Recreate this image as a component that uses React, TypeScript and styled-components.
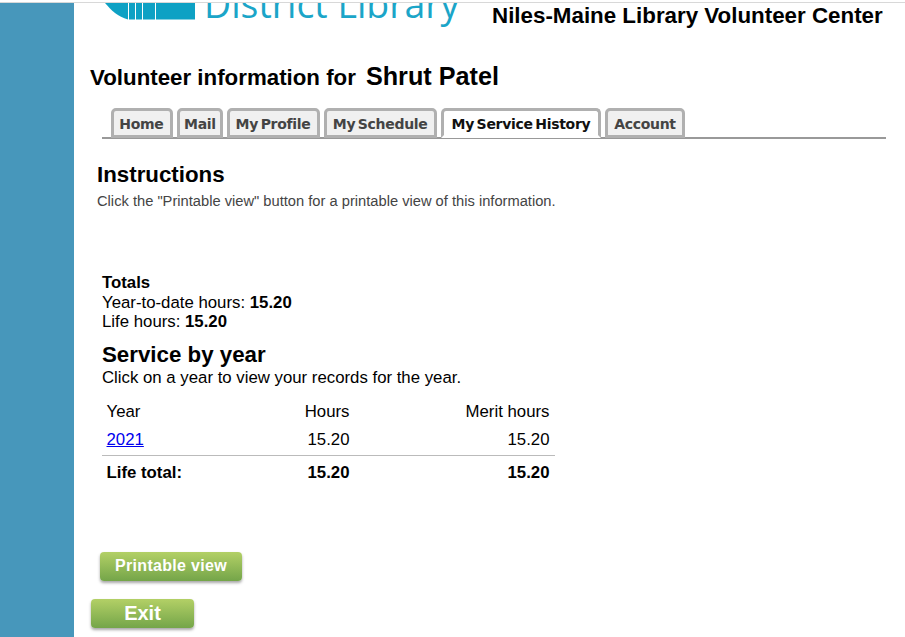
import styled, {createGlobalStyle} from "styled-components";

const GlobalStyle = createGlobalStyle`
  html, body {
    margin: 0;
    padding: 0;
    background: #fff;
  }
  body {
    padding-top: 2px;
    font-family: "Liberation Sans", Arial, sans-serif;
    color: #000;
  }
`;

const Page = styled.div`
  display: flex;
  width: 905px;
  height: 634px;
  border-top: 1px solid #d8d8d8;
  overflow: hidden;
`;
const Sidebar = styled.aside`
  width: 74px;
  flex: none;
  background: #4797bb;
`;
const Main = styled.main`
  flex: 1;
  min-width: 0;
`;
const Header = styled.header`
  display: flex;
  height: 29px;
  overflow: hidden;
`;
const Logo = styled.div`
  display: flex;
  align-items: flex-start;
  gap: 9px;
  width: 418px;
  padding-left: 29px;
  box-sizing: border-box;
`;
const LogoMark = styled.svg`
  width: 92px;
  height: 17px;
  flex: none;
`;
const LogoText = styled.div`
  margin-top: -19px;
  font-family: "Open Sans", sans-serif;
  font-size: 37.4px;
  font-weight: 400;
  line-height: 40px;
  color: #1ba5c8;
  white-space: nowrap;
`;
const SiteTitle = styled.div`
  font-size: 22.35px;
  font-weight: bold;
  line-height: 26px;
  white-space: nowrap;
`;
const VolunteerHeading = styled.h1`
  display: flex;
  align-items: baseline;
  gap: 10px;
  margin: 28px 0 0 16px;
  font-size: 22.3px;
  font-weight: bold;
  line-height: 32px;
`;
const VolunteerName = styled.span`
  font-size: 25.2px;
`;
const TabBar = styled.nav`
  display: flex;
  gap: 4px;
  margin: 14px 19px 0 28px;
  padding-left: 8.5px;
  height: 29px;
  border-bottom: 2px solid #999;
`;
const Tab = styled.a<{$active?: boolean; $narrow?: boolean}>`
  display: flex;
  align-items: center;
  height: 30px;
  box-sizing: border-box;
  padding: 2px ${(p) => (p.$active ? "8px" : p.$narrow ? "4px" : "6.5px")} 0
    ${(p) => (p.$active ? "7.5px" : p.$narrow ? "4px" : "5.8px")};
  border: 3px solid #b0b0b0;
  border-bottom-color: ${(p) => (p.$active ? "#fff" : "#b0b0b0")};
  border-radius: 5px 5px 0 0;
  background: ${(p) => (p.$active ? "#fff" : "#f0f0f0")};
  color: ${(p) => (p.$active ? "#111" : "#444")};
  font-family: "DejaVu Sans", sans-serif;
  font-size: 14px;
  font-weight: bold;
  letter-spacing: -0.3px;
  word-spacing: -2px;
  white-space: nowrap;
`;
const Instructions = styled.section`
  margin: 22px 0 0 23px;
`;
const SectionTitle = styled.h2`
  margin: 0;
  font-size: 22.3px;
  font-weight: bold;
  line-height: 28px;
`;
const Hint = styled.p`
  margin: 3px 0 0;
  font-size: 14.7px;
  line-height: 18px;
  color: #444;
`;
const Service = styled.section`
  margin: 63px 0 0 28px;
  font-size: 16.8px;
  line-height: 19.5px;
`;
const Label = styled.div`
  font-weight: bold;
`;
const ServiceTitle = styled.h2`
  margin: 10px 0 0;
  font-size: 22.3px;
  font-weight: bold;
  line-height: 26px;
`;
const HoursTable = styled.table`
  width: 453px;
  margin-top: 10px;
  border-collapse: collapse;
  font-size: 16.8px;
  line-height: 19px;
`;
const Cell = styled.td`
  padding: 5px 5.5px 4px 4.5px;
  text-align: right;
  &:first-child {
    width: 130px;
    text-align: left;
  }
  &:nth-child(2) {
    width: 103px;
  }
`;
const YearRow = styled.tr`
  td {
    padding-bottom: 6px;
  }
`;
const TotalRow = styled.tr`
  border-top: 1px solid #bbb;
  font-weight: bold;
  td {
    padding-top: 7px;
  }
`;
const YearLink = styled.a`
  color: #00e;
  text-decoration: underline;
`;
const Actions = styled.div`
  display: flex;
  flex-direction: column;
  align-items: flex-start;
  gap: 18px;
  margin-top: 66px;
`;
const GreenButton = styled.button<{$large?: boolean}>`
  display: block;
  width: ${(p) => (p.$large ? "103px" : "142px")};
  height: 29px;
  margin-left: ${(p) => (p.$large ? "17px" : "26px")};
  padding: ${(p) => (p.$large ? "0" : "0 0 2px")};
  border: none;
  border-radius: 4px;
  background: linear-gradient(#b3d066, #74a549);
  box-shadow: 0 2px 3px rgba(0, 0, 0, 0.35);
  color: #fff;
  font-family: "Liberation Sans", Arial, sans-serif;
  font-size: ${(p) => (p.$large ? "20px" : "16px")};
  font-weight: bold;
  letter-spacing: ${(p) => (p.$large ? "0" : "0.3px")};
`;

const tabs = ["Home", "Mail", "My Profile", "My Schedule", "My Service History", "Account"];

export default function App() {
  return (
    <Page>
      <GlobalStyle />
      <Sidebar />
      <Main>
        <Header>
          <Logo>
            <LogoMark viewBox="0 0 92 17">
              <path d="M2 0 H25 V16.5 C15 14 8 7 2 0 Z" fill="#0ea1c4" />
              <path d="M26 0 H32 V16.5 H26 Z M33 0 H39 V16.5 H33 Z M40 0 H52 V16.5 H40 Z M53 0 H92 V16.5 H53 Z" fill="#0ea1c4" />
            </LogoMark>
            <LogoText>District Library</LogoText>
          </Logo>
          <SiteTitle>Niles-Maine Library Volunteer Center</SiteTitle>
        </Header>
        <VolunteerHeading>
          Volunteer information for <VolunteerName>Shrut Patel</VolunteerName>
        </VolunteerHeading>
        <TabBar>
          {tabs.map((tab) => (
            <Tab key={tab} $active={tab === "My Service History"} $narrow={tab === "Mail"}>{tab}</Tab>
          ))}
        </TabBar>
        <Instructions>
          <SectionTitle>Instructions</SectionTitle>
          <Hint>Click the "Printable view" button for a printable view of this information.</Hint>
        </Instructions>
        <Service>
          <Label>Totals</Label>
          <div>Year-to-date hours: <b>15.20</b></div>
          <div>Life hours: <b>15.20</b></div>
          <ServiceTitle>Service by year</ServiceTitle>
          <div>Click on a year to view your records for the year.</div>
          <HoursTable>
            <tbody>
              <tr>
                <Cell>Year</Cell>
                <Cell>Hours</Cell>
                <Cell>Merit hours</Cell>
              </tr>
              <YearRow>
                <Cell><YearLink href="#">2021</YearLink></Cell>
                <Cell>15.20</Cell>
                <Cell>15.20</Cell>
              </YearRow>
              <TotalRow>
                <Cell>Life total:</Cell>
                <Cell>15.20</Cell>
                <Cell>15.20</Cell>
              </TotalRow>
            </tbody>
          </HoursTable>
        </Service>
        <Actions>
          <GreenButton>Printable view</GreenButton>
          <GreenButton $large>Exit</GreenButton>
        </Actions>
      </Main>
    </Page>
  );
}
